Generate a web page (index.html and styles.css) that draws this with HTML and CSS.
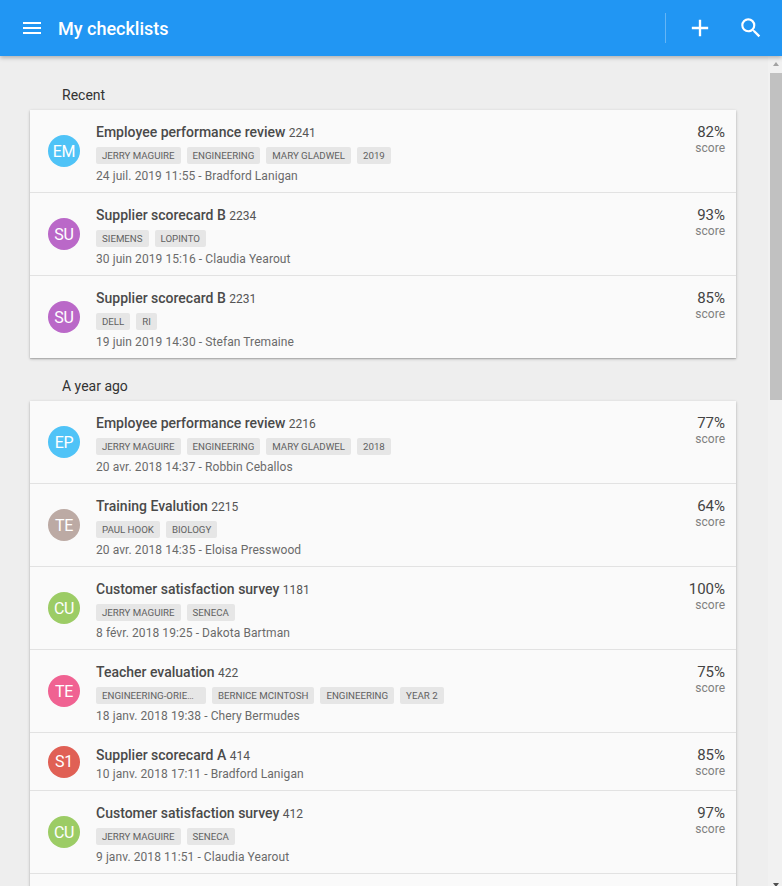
FILE: index.html
```html
<!DOCTYPE html>
<html lang="fr">
<head>
<meta charset="utf-8">
<title>My checklists</title>
<link rel="stylesheet" href="styles.css">
</head>
<body>
<header class="appbar">
  <button class="icon-btn menu-btn" aria-label="Menu">
    <svg viewBox="0 0 24 24" width="24" height="24"><path fill="#fff" d="M3 18h18v-2H3v2zm0-5h18v-2H3v2zm0-7v2h18V6H3z"/></svg>
  </button>
  <h1 class="appbar-title">My checklists</h1>
  <div class="appbar-divider"></div>
  <button class="icon-btn add-btn" aria-label="Add">
    <svg viewBox="0 0 24 24" width="28" height="28"><path fill="#fff" d="M19 13h-6v6h-2v-6H5v-2h6V5h2v6h6v2z"/></svg>
  </button>
  <button class="icon-btn search-btn" aria-label="Search">
    <svg viewBox="0 0 24 24" width="26" height="26"><path fill="#fff" d="M15.5 14h-.79l-.28-.27A6.47 6.47 0 0 0 16 9.5 6.5 6.5 0 1 0 9.5 16c1.61 0 3.090-.59 4.23-1.57l.27.28v.79l5 4.99L20.49 19l-4.99-5zm-6 0C7.01 14 5 11.99 5 9.5S7.01 5 9.5 5 14 7.01 14 9.5 11.99 14 9.5 14z"/></svg>
  </button>
</header>

<div class="viewport">
<main class="content">
  <section class="group">
    <h2 class="group-label">Recent</h2>
    <ul class="card">
      <li class="row">
        <span class="avatar c-blue">EM</span>
        <div class="info">
          <div class="title">Employee performance review <span class="num">2241</span></div>
          <div class="tags"><span class="tag">JERRY MAGUIRE</span><span class="tag">ENGINEERING</span><span class="tag">MARY GLADWEL</span><span class="tag">2019</span></div>
          <div class="meta">24 juil. 2019 11:55 - Bradford Lanigan</div>
        </div>
        <div class="score"><span class="pct">82%</span><span class="lbl">score</span></div>
      </li>
      <li class="row">
        <span class="avatar c-purple">SU</span>
        <div class="info">
          <div class="title">Supplier scorecard B <span class="num">2234</span></div>
          <div class="tags"><span class="tag">SIEMENS</span><span class="tag">LOPINTO</span></div>
          <div class="meta">30 juin 2019 15:16 - Claudia Yearout</div>
        </div>
        <div class="score"><span class="pct">93%</span><span class="lbl">score</span></div>
      </li>
      <li class="row">
        <span class="avatar c-purple">SU</span>
        <div class="info">
          <div class="title">Supplier scorecard B <span class="num">2231</span></div>
          <div class="tags"><span class="tag">DELL</span><span class="tag">RI</span></div>
          <div class="meta">19 juin 2019 14:30 - Stefan Tremaine</div>
        </div>
        <div class="score"><span class="pct">85%</span><span class="lbl">score</span></div>
      </li>
    </ul>
  </section>

  <section class="group">
    <h2 class="group-label">A year ago</h2>
    <ul class="card">
      <li class="row">
        <span class="avatar c-blue">EP</span>
        <div class="info">
          <div class="title">Employee performance review <span class="num">2216</span></div>
          <div class="tags"><span class="tag">JERRY MAGUIRE</span><span class="tag">ENGINEERING</span><span class="tag">MARY GLADWEL</span><span class="tag">2018</span></div>
          <div class="meta">20 avr. 2018 14:37 - Robbin Ceballos</div>
        </div>
        <div class="score"><span class="pct">77%</span><span class="lbl">score</span></div>
      </li>
      <li class="row">
        <span class="avatar c-brown">TE</span>
        <div class="info">
          <div class="title">Training Evalution <span class="num">2215</span></div>
          <div class="tags"><span class="tag">PAUL HOOK</span><span class="tag">BIOLOGY</span></div>
          <div class="meta">20 avr. 2018 14:35 - Eloisa Presswood</div>
        </div>
        <div class="score"><span class="pct">64%</span><span class="lbl">score</span></div>
      </li>
      <li class="row">
        <span class="avatar c-green">CU</span>
        <div class="info">
          <div class="title">Customer satisfaction survey <span class="num">1181</span></div>
          <div class="tags"><span class="tag">JERRY MAGUIRE</span><span class="tag">SENECA</span></div>
          <div class="meta">8 févr. 2018 19:25 - Dakota Bartman</div>
        </div>
        <div class="score"><span class="pct">100%</span><span class="lbl">score</span></div>
      </li>
      <li class="row">
        <span class="avatar c-pink">TE</span>
        <div class="info">
          <div class="title">Teacher evaluation <span class="num">422</span></div>
          <div class="tags"><span class="tag tag-trunc">ENGINEERING-ORIENTED</span><span class="tag">BERNICE MCINTOSH</span><span class="tag">ENGINEERING</span><span class="tag">YEAR 2</span></div>
          <div class="meta">18 janv. 2018 19:38 - Chery Bermudes</div>
        </div>
        <div class="score"><span class="pct">75%</span><span class="lbl">score</span></div>
      </li>
      <li class="row">
        <span class="avatar c-red">S1</span>
        <div class="info">
          <div class="title">Supplier scorecard A <span class="num">414</span></div>
          <div class="meta">10 janv. 2018 17:11 - Bradford Lanigan</div>
        </div>
        <div class="score"><span class="pct">85%</span><span class="lbl">score</span></div>
      </li>
      <li class="row">
        <span class="avatar c-green">CU</span>
        <div class="info">
          <div class="title">Customer satisfaction survey <span class="num">412</span></div>
          <div class="tags"><span class="tag">JERRY MAGUIRE</span><span class="tag">SENECA</span></div>
          <div class="meta">9 janv. 2018 11:51 - Claudia Yearout</div>
        </div>
        <div class="score"><span class="pct">97%</span><span class="lbl">score</span></div>
      </li>
      <li class="row">
        <span class="avatar c-purple">SU</span>
        <div class="info">
          <div class="title">Supplier scorecard B <span class="num">398</span></div>
          <div class="tags"><span class="tag">SIEMENS</span><span class="tag">LOPINTO</span></div>
          <div class="meta">5 janv. 2018 10:02 - Stefan Tremaine</div>
        </div>
        <div class="score"><span class="pct">88%</span><span class="lbl">score</span></div>
      </li>
    </ul>
  </section>
</main>
<div class="scrollbar" aria-hidden="true">
  <div class="sb-btn"><span class="arrow-up"></span></div>
  <div class="sb-thumb"></div>
  <div class="sb-fill"></div>
  <div class="sb-btn"><span class="arrow-down"></span></div>
</div>
</div>
</body>
</html>
```

FILE: styles.css
```css
* { box-sizing: border-box; }

html, body {
  margin: 0;
  padding: 0;
  height: 100%;
  overflow: hidden;
  background: #eeeeee;
  font-family: Roboto, "Liberation Sans", Arial, sans-serif;
  color: #424242;
}

.appbar {
  position: relative;
  z-index: 2;
  height: 56px;
  background: #2196f3;
  display: flex;
  align-items: center;
  box-shadow: 0 2px 4px rgba(0, 0, 0, 0.25);
}

.icon-btn {
  border: 0;
  background: transparent;
  padding: 0;
  margin: 0;
  display: flex;
  align-items: center;
  justify-content: center;
  cursor: pointer;
}

.menu-btn {
  width: 24px;
  height: 24px;
  margin-left: 20px;
}

.appbar-title {
  margin: 0 0 0 14px;
  font-size: 18px;
  font-weight: 500;
  color: #fff;
  flex: 1;
}

.appbar-divider {
  width: 1px;
  height: 30px;
  background: rgba(255, 255, 255, 0.3);
  margin-right: 20px;
}

.add-btn {
  width: 28px;
  height: 28px;
}

.search-btn {
  width: 26px;
  height: 26px;
  margin-left: 24px;
  margin-right: 18px;
}

.viewport {
  display: flex;
  height: 836px;
}

.content {
  flex: 1;
  min-width: 0;
  overflow: hidden;
  padding: 11px 0 0;
}

.scrollbar {
  flex: none;
  width: 14px;
  background: #f1f1f1;
  display: flex;
  flex-direction: column;
}

.sb-btn {
  height: 15px;
  display: flex;
  align-items: center;
  justify-content: center;
  padding-left: 2px;
}

.arrow-up {
  width: 0;
  height: 0;
  border-left: 3.5px solid transparent;
  border-right: 3.5px solid transparent;
  border-bottom: 4px solid #a3a3a3;
}

.arrow-down {
  width: 0;
  height: 0;
  border-left: 3.5px solid transparent;
  border-right: 3.5px solid transparent;
  border-top: 4px solid #505050;
}

.sb-thumb {
  height: 327px;
  margin: 2px 0 0 2px;
  background: #c1c1c1;
}

.sb-fill {
  flex: 1;
}

.group-label {
  margin: 18px 0 5px 62px;
  font-size: 14px;
  line-height: 20px;
  font-weight: 400;
  color: #333;
}

.card {
  list-style: none;
  margin: 0 32px 0 30px;
  padding: 0;
  background: #fafafa;
  box-shadow: 0 1px 3px rgba(0, 0, 0, 0.22), 0 1px 1px rgba(0, 0, 0, 0.14);
}

.row {
  display: flex;
  align-items: center;
  border-bottom: 1px solid #e2e2e2;
}

.row:last-child {
  border-bottom: 0;
}

.avatar {
  flex: none;
  width: 32px;
  height: 32px;
  border-radius: 50%;
  margin: 0 16px 0 18px;
  color: #fff;
  font-size: 16px;
  display: flex;
  align-items: center;
  justify-content: center;
  letter-spacing: -0.3px;
}

.c-blue { background: #4fc3f7; }
.c-purple { background: #ba68c8; }
.c-brown { background: #bcaaa4; }
.c-green { background: #9ccc65; }
.c-pink { background: #f06292; }
.c-red { background: #e06055; }

.info {
  flex: 1;
  min-width: 0;
  align-self: stretch;
  padding: 13px 0 7px;
}

.title {
  height: 18px;
  font-size: 14px;
  line-height: 18px;
  font-weight: 500;
  color: #4a4a4a;
  white-space: nowrap;
}

.num {
  font-size: 12px;
  line-height: 1;
  font-weight: 400;
  color: #555;
}

.tags {
  display: flex;
  gap: 6px;
  margin-top: 6px;
  height: 17px;
}

.tag {
  display: block;
  height: 17px;
  line-height: 17px;
  padding: 0 6px;
  background: #e6e6e6;
  border-radius: 2px;
  font-size: 9.7px;
  color: #616161;
  white-space: nowrap;
}

.tag-trunc {
  max-width: 110px;
  overflow: hidden;
  text-overflow: ellipsis;
}

.meta {
  height: 18px;
  margin-top: 3px;
  font-size: 12px;
  line-height: 18px;
  letter-spacing: 0.08px;
  color: #6a6a6a;
  white-space: nowrap;
}

.title + .meta {
  margin-top: 1px;
}

.score {
  align-self: flex-start;
  padding: 13px 11px 0 12px;
  display: flex;
  flex-direction: column;
  align-items: flex-end;
}

.pct {
  font-size: 15px;
  line-height: 18px;
  color: #444;
}

.lbl {
  font-size: 12px;
  line-height: 14px;
  color: #808080;
}
```
